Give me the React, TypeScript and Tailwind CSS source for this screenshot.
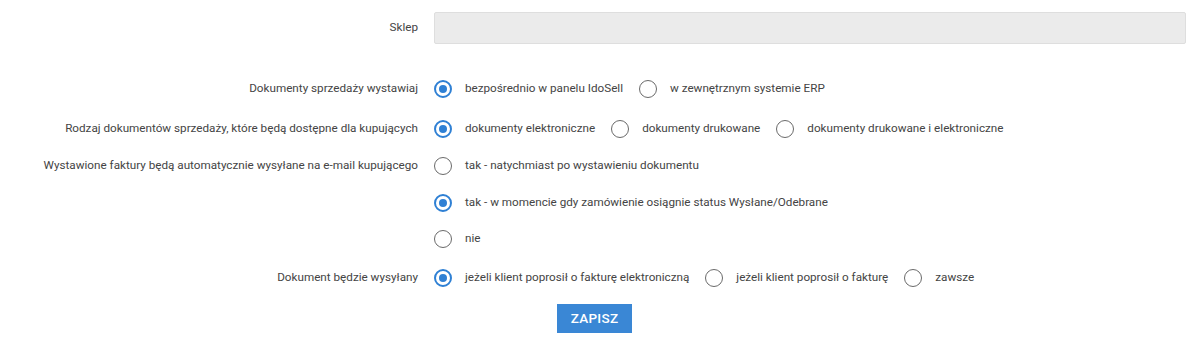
import React from "react";

type Opt = { label: string; checked?: boolean };

function Radio({ label, checked }: Opt) {
  return (
    <label className="flex items-center mr-[16px] cursor-pointer">
      <span
        className={
          "w-[18px] h-[18px] rounded-full flex items-center justify-center shrink-0 " +
          (checked ? "border-2 border-[#2f80d4]" : "border-[1.5px] border-[#6a6a6a]")
        }
      >
        {checked && <span className="w-[8px] h-[8px] rounded-full bg-[#2f80d4]" />}
      </span>
      <span className="ml-[13px] text-[11.7px] text-[#444] whitespace-nowrap">{label}</span>
    </label>
  );
}

function Row({
  label,
  children,
  className = "",
}: {
  label: string;
  children: React.ReactNode;
  className?: string;
}) {
  return (
    <div className={"flex items-start " + className}>
      <div className="w-[418px] shrink-0 h-[36px] flex items-center justify-end text-[11.7px] text-[#444] whitespace-nowrap">
        {label}
      </div>
      <div className="ml-[16px] flex-1">{children}</div>
    </div>
  );
}

export default function App() {
  return (
    <div
      className="w-[1195px] h-[343px] bg-white"
      style={{ fontFamily: "Roboto, 'Liberation Sans', sans-serif" }}
    >
      <div className="pt-[12px] flex items-center">
        <div className="w-[418px] shrink-0 flex justify-end text-[11.7px] text-[#444]">Sklep</div>
        <div className="ml-[16px] mr-[9px] flex-1 h-[32px] bg-[#ebebeb] border border-[#dedede] rounded-[2px]" />
      </div>

      <Row label="Dokumenty sprzedaży wystawiaj" className="mt-[27px]">
        <div className="h-[36px] flex items-center">
          <Radio label="bezpośrednio w panelu IdoSell" checked />
          <Radio label="w zewnętrznym systemie ERP" />
        </div>
      </Row>

      <Row label="Rodzaj dokumentów sprzedaży, które będą dostępne dla kupujących" className="mt-[4px]">
        <div className="h-[36px] flex items-center">
          <Radio label="dokumenty elektroniczne" checked />
          <Radio label="dokumenty drukowane" />
          <Radio label="dokumenty drukowane i elektroniczne" />
        </div>
      </Row>

      <Row
        label="Wystawione faktury będą automatycznie wysyłane na e-mail kupującego"
        className="mt-[1px]"
      >
        <div className="flex flex-col">
          <div className="h-[36.5px] flex items-center">
            <Radio label="tak - natychmiast po wystawieniu dokumentu" />
          </div>
          <div className="h-[36.5px] flex items-center">
            <Radio label="tak - w momencie gdy zamówienie osiągnie status Wysłane/Odebrane" checked />
          </div>
          <div className="h-[36.5px] flex items-center">
            <Radio label="nie" />
          </div>
        </div>
      </Row>

      <Row label="Dokument będzie wysyłany" className="mt-[2px]">
        <div className="h-[36px] flex items-center">
          <Radio label="jeżeli klient poprosił o fakturę elektroniczną" checked />
          <Radio label="jeżeli klient poprosił o fakturę" />
          <Radio label="zawsze" />
        </div>
      </Row>

      <div className="mt-[8px] pl-[557px]">
        <button className="w-[75px] h-[29px] bg-[#3a87d5] text-white text-[13.5px] font-medium tracking-[0.3px]">
          ZAPISZ
        </button>
      </div>
    </div>
  );
}
